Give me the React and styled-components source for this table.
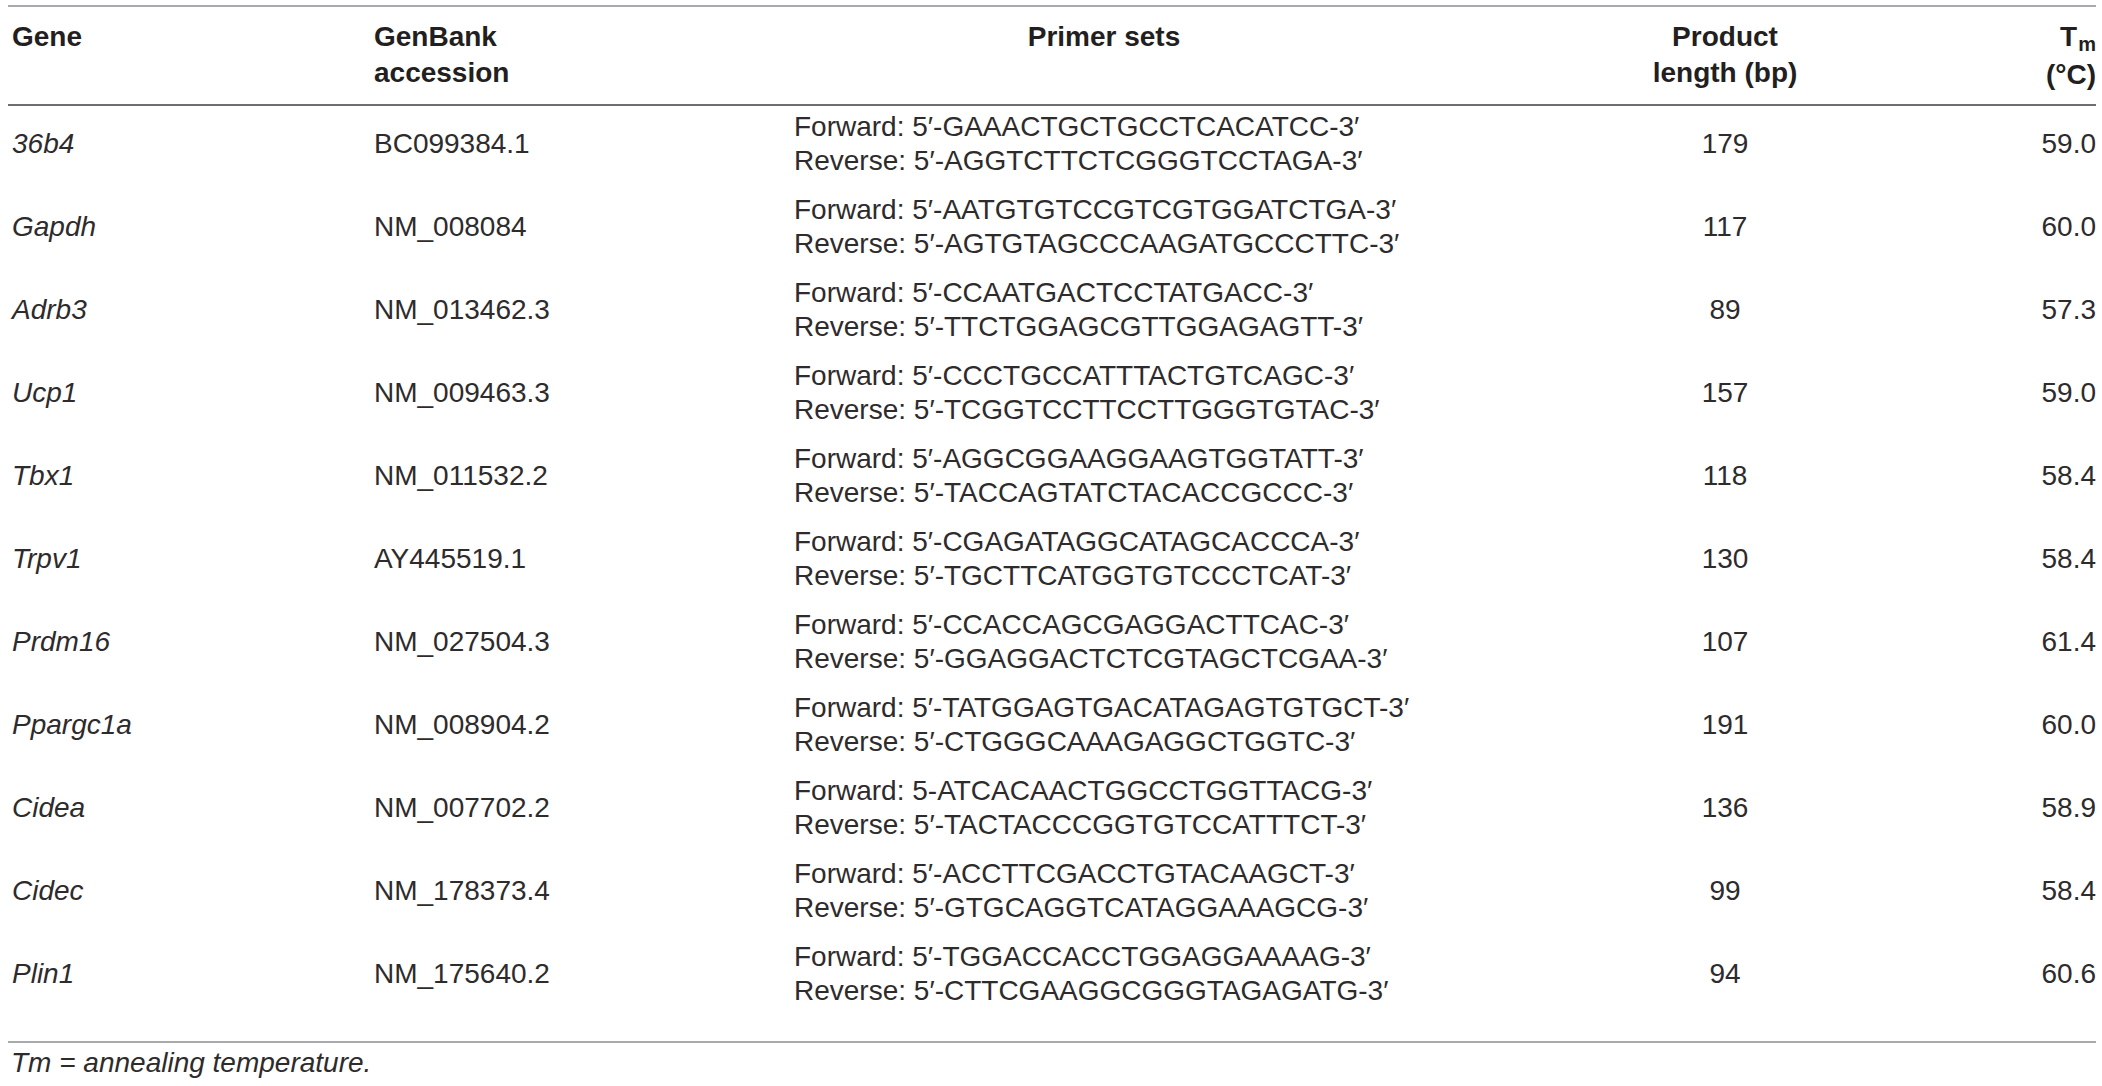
import React from 'react';
import styled, { createGlobalStyle } from 'styled-components';

const GlobalStyle = createGlobalStyle`
  body {
    margin: 0;
    background: #ffffff;
    font-family: "Liberation Sans", Arial, sans-serif;
    color: #231f20;
  }
`;

const COLUMNS = '366px 420px 620px 622px 60px';

const rows = [
  { gene: '36b4', acc: 'BC099384.1', fwd: "5′-GAAACTGCTGCCTCACATCC-3′", rev: "5′-AGGTCTTCTCGGGTCCTAGA-3′", len: '179', tm: '59.0' },
  { gene: 'Gapdh', acc: 'NM_008084', fwd: "5′-AATGTGTCCGTCGTGGATCTGA-3′", rev: "5′-AGTGTAGCCCAAGATGCCCTTC-3′", len: '117', tm: '60.0' },
  { gene: 'Adrb3', acc: 'NM_013462.3', fwd: "5′-CCAATGACTCCTATGACC-3′", rev: "5′-TTCTGGAGCGTTGGAGAGTT-3′", len: '89', tm: '57.3' },
  { gene: 'Ucp1', acc: 'NM_009463.3', fwd: "5′-CCCTGCCATTTACTGTCAGC-3′", rev: "5′-TCGGTCCTTCCTTGGGTGTAC-3′", len: '157', tm: '59.0' },
  { gene: 'Tbx1', acc: 'NM_011532.2', fwd: "5′-AGGCGGAAGGAAGTGGTATT-3′", rev: "5′-TACCAGTATCTACACCGCCC-3′", len: '118', tm: '58.4' },
  { gene: 'Trpv1', acc: 'AY445519.1', fwd: "5′-CGAGATAGGCATAGCACCCA-3′", rev: "5′-TGCTTCATGGTGTCCCTCAT-3′", len: '130', tm: '58.4' },
  { gene: 'Prdm16', acc: 'NM_027504.3', fwd: "5′-CCACCAGCGAGGACTTCAC-3′", rev: "5′-GGAGGACTCTCGTAGCTCGAA-3′", len: '107', tm: '61.4' },
  { gene: 'Ppargc1a', acc: 'NM_008904.2', fwd: "5′-TATGGAGTGACATAGAGTGTGCT-3′", rev: "5′-CTGGGCAAAGAGGCTGGTC-3′", len: '191', tm: '60.0' },
  { gene: 'Cidea', acc: 'NM_007702.2', fwd: "5-ATCACAACTGGCCTGGTTACG-3′", rev: "5′-TACTACCCGGTGTCCATTTCT-3′", len: '136', tm: '58.9' },
  { gene: 'Cidec', acc: 'NM_178373.4', fwd: "5′-ACCTTCGACCTGTACAAGCT-3′", rev: "5′-GTGCAGGTCATAGGAAAGCG-3′", len: '99', tm: '58.4' },
  { gene: 'Plin1', acc: 'NM_175640.2', fwd: "5′-TGGACCACCTGGAGGAAAAG-3′", rev: "5′-CTTCGAAGGCGGGTAGAGATG-3′", len: '94', tm: '60.6' },
];

const Page = styled.div`
  padding: 5px 6px 0 8px;
`;

const Table = styled.div`
  width: 2088px;
  border-top: 2px solid #a7a9ac;
  border-bottom: 2px solid #a7a9ac;
`;

const HeadRow = styled.div`
  display: grid;
  grid-template-columns: ${COLUMNS};
  padding: 12px 0 11px;
  border-bottom: 2px solid #6d6e71;
`;

const HeadCell = styled.div`
  font-weight: 700;
  font-size: 28px;
  line-height: 36px;
  text-align: ${(p) => p.$align || 'left'};
  padding-left: ${(p) => p.$pad || 0}px;
  white-space: nowrap;
`;

const Sub = styled.sub`
  font-size: 20px;
  vertical-align: baseline;
  position: relative;
  top: 5px;
  margin-left: 1px;
`;

const Body = styled.div`
  padding-bottom: 22px;
`;

const Row = styled.div`
  display: grid;
  grid-template-columns: ${COLUMNS};
  align-items: center;
  padding: 4px 0 11px;
  color: #2e2b2c;
`;

const Cell = styled.div`
  font-size: 28px;
  line-height: 34px;
  font-style: ${(p) => (p.$italic ? 'italic' : 'normal')};
  text-align: ${(p) => p.$align || 'left'};
  padding-left: ${(p) => p.$pad || 0}px;
  white-space: nowrap;
`;

const Primer = styled.div`
  white-space: nowrap;
`;

const Footnote = styled.div`
  font-size: 28px;
  line-height: 34px;
  font-style: italic;
  color: #2e2b2c;
  padding: 3px 0 0 3px;
`;

export default function App() {
  return (
    <>
      <GlobalStyle />
      <Page>
        <Table>
          <HeadRow>
            <HeadCell $pad={4}>Gene</HeadCell>
            <HeadCell>
              GenBank
              <br />
              accession
            </HeadCell>
            <HeadCell $align="center">Primer sets</HeadCell>
            <HeadCell $align="center">
              Product
              <br />
              length (bp)
            </HeadCell>
            <HeadCell $align="right">
              T<Sub>m</Sub>
              <br />
              (°C)
            </HeadCell>
          </HeadRow>
          <Body>
            {rows.map((r) => (
              <Row key={r.gene}>
                <Cell $italic $pad={4}>{r.gene}</Cell>
                <Cell>{r.acc}</Cell>
                <Cell>
                  <Primer>Forward: {r.fwd}</Primer>
                  <Primer>Reverse: {r.rev}</Primer>
                </Cell>
                <Cell $align="center">{r.len}</Cell>
                <Cell $align="right">{r.tm}</Cell>
              </Row>
            ))}
          </Body>
        </Table>
        <Footnote>Tm = annealing temperature.</Footnote>
      </Page>
    </>
  );
}
